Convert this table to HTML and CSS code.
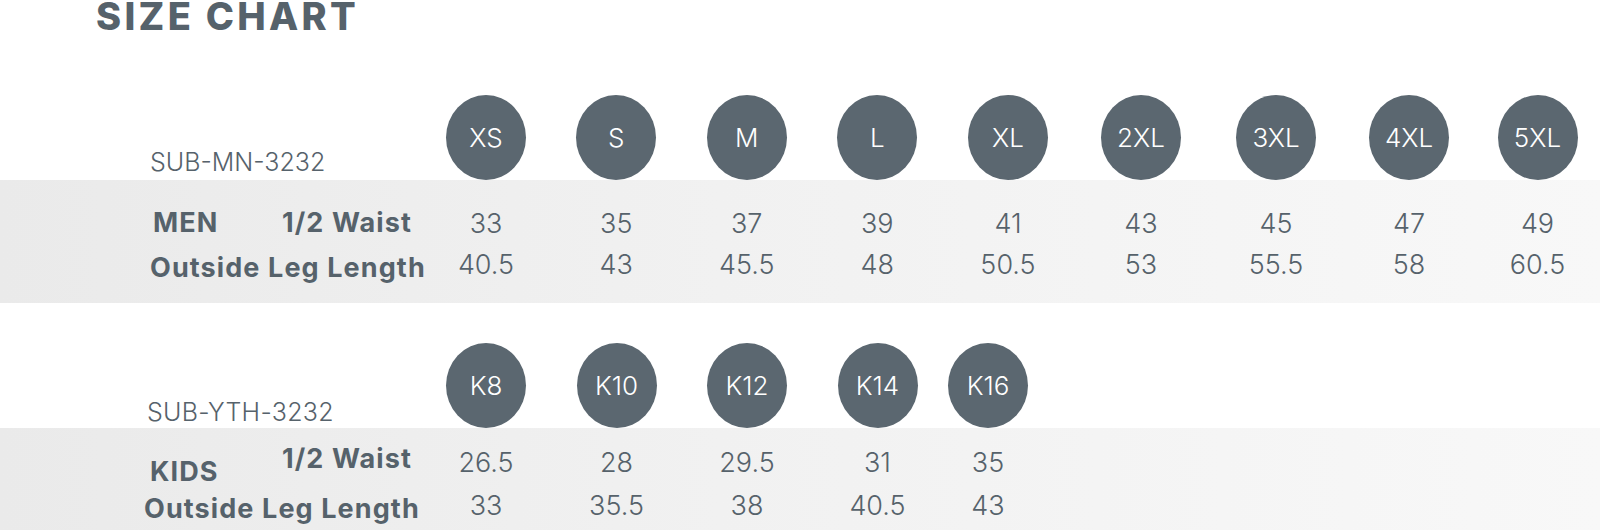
FILE: index.html
```html
<!DOCTYPE html>
<html lang="en">
<head>
<meta charset="utf-8">
<title>Size Chart</title>
<link rel="stylesheet" href="styles.css">
</head>
<body>
<div class="page">
  <h1 class="title">SIZE CHART</h1>

  <section class="chart chart-men">
    <div class="head cols-men">
      <div class="code code-men">SUB-MN-3232</div>
      <div class="size"><span class="dot">XS</span></div>
      <div class="size"><span class="dot">S</span></div>
      <div class="size"><span class="dot">M</span></div>
      <div class="size"><span class="dot">L</span></div>
      <div class="size"><span class="dot">XL</span></div>
      <div class="size"><span class="dot">2XL</span></div>
      <div class="size"><span class="dot">3XL</span></div>
      <div class="size"><span class="dot">4XL</span></div>
      <div class="size"><span class="dot">5XL</span></div>
    </div>
    <div class="band band-men cols-men">
      <div class="labels labels-men">
        <div class="lab-top">
          <span class="lab key key-men">MEN</span>
          <span class="lab">1/2 Waist</span>
        </div>
        <div class="lab lab-bot lab-bot-men">Outside Leg Length</div>
      </div>
      <div class="vals vals-men"><span>33</span><span>40.5</span></div>
      <div class="vals vals-men"><span>35</span><span>43</span></div>
      <div class="vals vals-men"><span>37</span><span>45.5</span></div>
      <div class="vals vals-men"><span>39</span><span>48</span></div>
      <div class="vals vals-men"><span>41</span><span>50.5</span></div>
      <div class="vals vals-men"><span>43</span><span>53</span></div>
      <div class="vals vals-men"><span>45</span><span>55.5</span></div>
      <div class="vals vals-men"><span>47</span><span>58</span></div>
      <div class="vals vals-men"><span>49</span><span>60.5</span></div>
    </div>
  </section>

  <section class="chart chart-kids">
    <div class="head head-kids cols-kids">
      <div class="code code-kids">SUB-YTH-3232</div>
      <div class="size"><span class="dot">K8</span></div>
      <div class="size"><span class="dot">K10</span></div>
      <div class="size"><span class="dot">K12</span></div>
      <div class="size"><span class="dot">K14</span></div>
      <div class="size"><span class="dot">K16</span></div>
    </div>
    <div class="band band-kids cols-kids">
      <div class="labels labels-kids">
        <div class="lab-top lab-top-kids">
          <span class="lab key key-kids">KIDS</span>
          <span class="lab">1/2 Waist</span>
        </div>
        <div class="lab lab-bot lab-bot-kids">Outside Leg Length</div>
      </div>
      <div class="vals vals-kids"><span>26.5</span><span>33</span></div>
      <div class="vals vals-kids"><span>28</span><span>35.5</span></div>
      <div class="vals vals-kids"><span>29.5</span><span>38</span></div>
      <div class="vals vals-kids"><span>31</span><span>40.5</span></div>
      <div class="vals vals-kids"><span>35</span><span>43</span></div>
    </div>
  </section>
</div>
</body>
</html>
```

FILE: styles.css
```css
* { box-sizing: border-box; }

html, body {
  margin: 0;
  padding: 0;
  background: #ffffff;
}

body {
  width: 1600px;
  height: 530px;
  overflow: hidden;
  font-family: "Inter", "Liberation Sans", sans-serif;
  color: #56626b;
}

.page {
  width: 1600px;
  display: flex;
  flex-direction: column;
}

.title {
  margin: 0;
  height: 32px;
  padding-left: 96px;
  font-size: 38px;
  line-height: 32px;
  font-weight: 800;
  letter-spacing: 3.3px;
  color: #56626b;
}

.chart {
  display: flex;
  flex-direction: column;
}

.cols-men {
  display: grid;
  grid-template-columns: 421px 130px 130.5px 130.5px 130.5px 131px 135px 135px 131px 126px;
}

.cols-kids {
  display: grid;
  grid-template-columns: 421px 130px 131px 130px 131px 90px;
}

.head {
  height: 148px;
  align-items: end;
}

.head-kids {
  height: 125px;
}

.code {
  font-size: 25px;
  line-height: 25px;
  font-weight: 300;
  color: #56626b;
  white-space: nowrap;
}

.code-men {
  padding-left: 150px;
  padding-bottom: 5px;
}

.code-kids {
  padding-left: 147px;
  padding-bottom: 3px;
  letter-spacing: 0.3px;
}

.size {
  display: flex;
  justify-content: center;
}

.dot {
  width: 80px;
  height: 85px;
  border-radius: 50%;
  background: #5b6770;
  color: #ffffff;
  display: flex;
  align-items: center;
  justify-content: center;
  font-size: 26px;
  line-height: 27px;
  font-weight: 300;
}

.band {
  background: linear-gradient(90deg, #eaeaea 0%, #f1f1f1 45%, #f8f8f8 100%);
}

.band-men {
  height: 123px;
  padding-top: 29px;
}

.band-kids {
  height: 102px;
  padding-top: 17px;
}

.labels {
  display: flex;
  flex-direction: column;
}

.lab-top {
  display: flex;
  align-items: flex-start;
}

.lab {
  font-size: 27px;
  line-height: 27px;
  font-weight: 700;
  letter-spacing: 1.1px;
  color: #56626b;
  white-space: nowrap;
}

.key {
  display: block;
}

.key-men {
  width: 282px;
  padding-left: 153px;
}

.key-kids {
  width: 282px;
  padding-left: 150px;
  margin-top: 13px;
}

.lab-top-kids {
  height: 50px;
}

.lab-bot-men {
  padding-left: 150px;
  margin-top: 18px;
}

.lab-bot-kids {
  padding-left: 144px;
}

.vals {
  display: flex;
  flex-direction: column;
  align-items: center;
  font-size: 27px;
  line-height: 27px;
  font-weight: 300;
  color: #56626b;
}

.vals-men {
  padding-top: 1px;
  gap: 14px;
}

.vals-kids {
  padding-top: 4px;
  gap: 16px;
}
```
